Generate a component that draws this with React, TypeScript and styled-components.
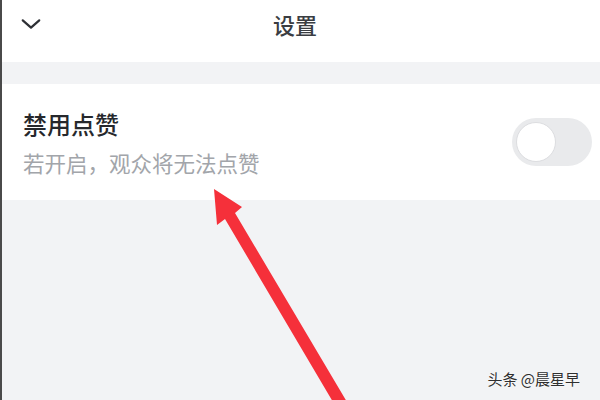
import styled, { createGlobalStyle } from 'styled-components'

const GlobalStyle = createGlobalStyle`
  html, body {
    margin: 0;
    padding: 0;
    background: #f2f3f5;
  }
  body {
    font-family: 'Noto Sans CJK SC', 'Noto Sans', sans-serif;
  }
`

const Screen = styled.div`
  position: relative;
  width: 600px;
  height: 400px;
  overflow: hidden;
  box-sizing: border-box;
  border-left: 2px solid #4a4a4a;
  background: #f2f3f5;
  display: flex;
  flex-direction: column;
`

const Header = styled.header`
  height: 62px;
  box-sizing: border-box;
  padding: 0 0 14px 18px;
  background: #fff;
  display: grid;
  grid-template-columns: 40px 1fr 40px;
  align-items: center;
`

const BackButton = styled.div`
  display: flex;
  align-items: center;
  svg {
    width: 22px;
    height: 22px;
    stroke: #2e3035;
  }
`

const Title = styled.h1`
  margin: 0;
  text-align: center;
  font-size: 22px;
  font-weight: 500;
  color: #3a3d42;
  transform: translateX(-15px);
`

const Divider = styled.div`
  height: 22px;
  background: #f2f3f5;
`

const Card = styled.section`
  height: 116px;
  box-sizing: border-box;
  padding: 0 8px 0 21px;
  background: #fff;
  display: flex;
  align-items: center;
  justify-content: space-between;
`

const Texts = styled.div`
  display: flex;
  flex-direction: column;
  gap: 9px;
`

const OptionName = styled.div`
  font-size: 24px;
  line-height: 32px;
  font-weight: 500;
  color: #26282c;
`

const OptionHint = styled.div`
  font-size: 21.5px;
  line-height: 28px;
  color: #a2a5aa;
`

const Switch = styled.div<{ $on?: boolean }>`
  width: 80px;
  height: 48px;
  border-radius: 24px;
  box-sizing: border-box;
  padding: 4px;
  background: ${(p) => (p.$on ? '#fe2c55' : '#e9eaec')};
  display: flex;
  justify-content: ${(p) => (p.$on ? 'flex-end' : 'flex-start')};
`

const Knob = styled.div`
  width: 40px;
  height: 40px;
  border-radius: 50%;
  box-sizing: border-box;
  background: #fff;
  border: 1.5px solid #dcdde0;
`

const Arrow = styled.svg`
  position: absolute;
  left: 0;
  top: 0;
  width: 600px;
  height: 400px;
  pointer-events: none;
`

const Watermark = styled.div`
  position: absolute;
  right: 20px;
  bottom: 11px;
  font-size: 15px;
  color: #2f2f2f;
  text-shadow: 0 0 2px #fff;
`

export default function App() {
  return (
    <>
      <GlobalStyle />
      <Screen>
        <Header>
          <BackButton>
            <svg viewBox="0 0 24 24" fill="none" strokeWidth="2.4" strokeLinecap="round" strokeLinejoin="round">
              <path d="M3 8l9 8 9-8" />
            </svg>
          </BackButton>
          <Title>设置</Title>
          <span />
        </Header>
        <Divider />
        <Card>
          <Texts>
            <OptionName>禁用点赞</OptionName>
            <OptionHint>若开启，观众将无法点赞</OptionHint>
          </Texts>
          <Switch>
            <Knob />
          </Switch>
        </Card>
        <Arrow viewBox="0 0 600 400">
          <polygon
            points="212,189 240,207 233,213 345,402 331,402 223,219 215,225"
            fill="#f5303a"
          />
        </Arrow>
        <Watermark>头条 @晨星早</Watermark>
      </Screen>
    </>
  )
}
